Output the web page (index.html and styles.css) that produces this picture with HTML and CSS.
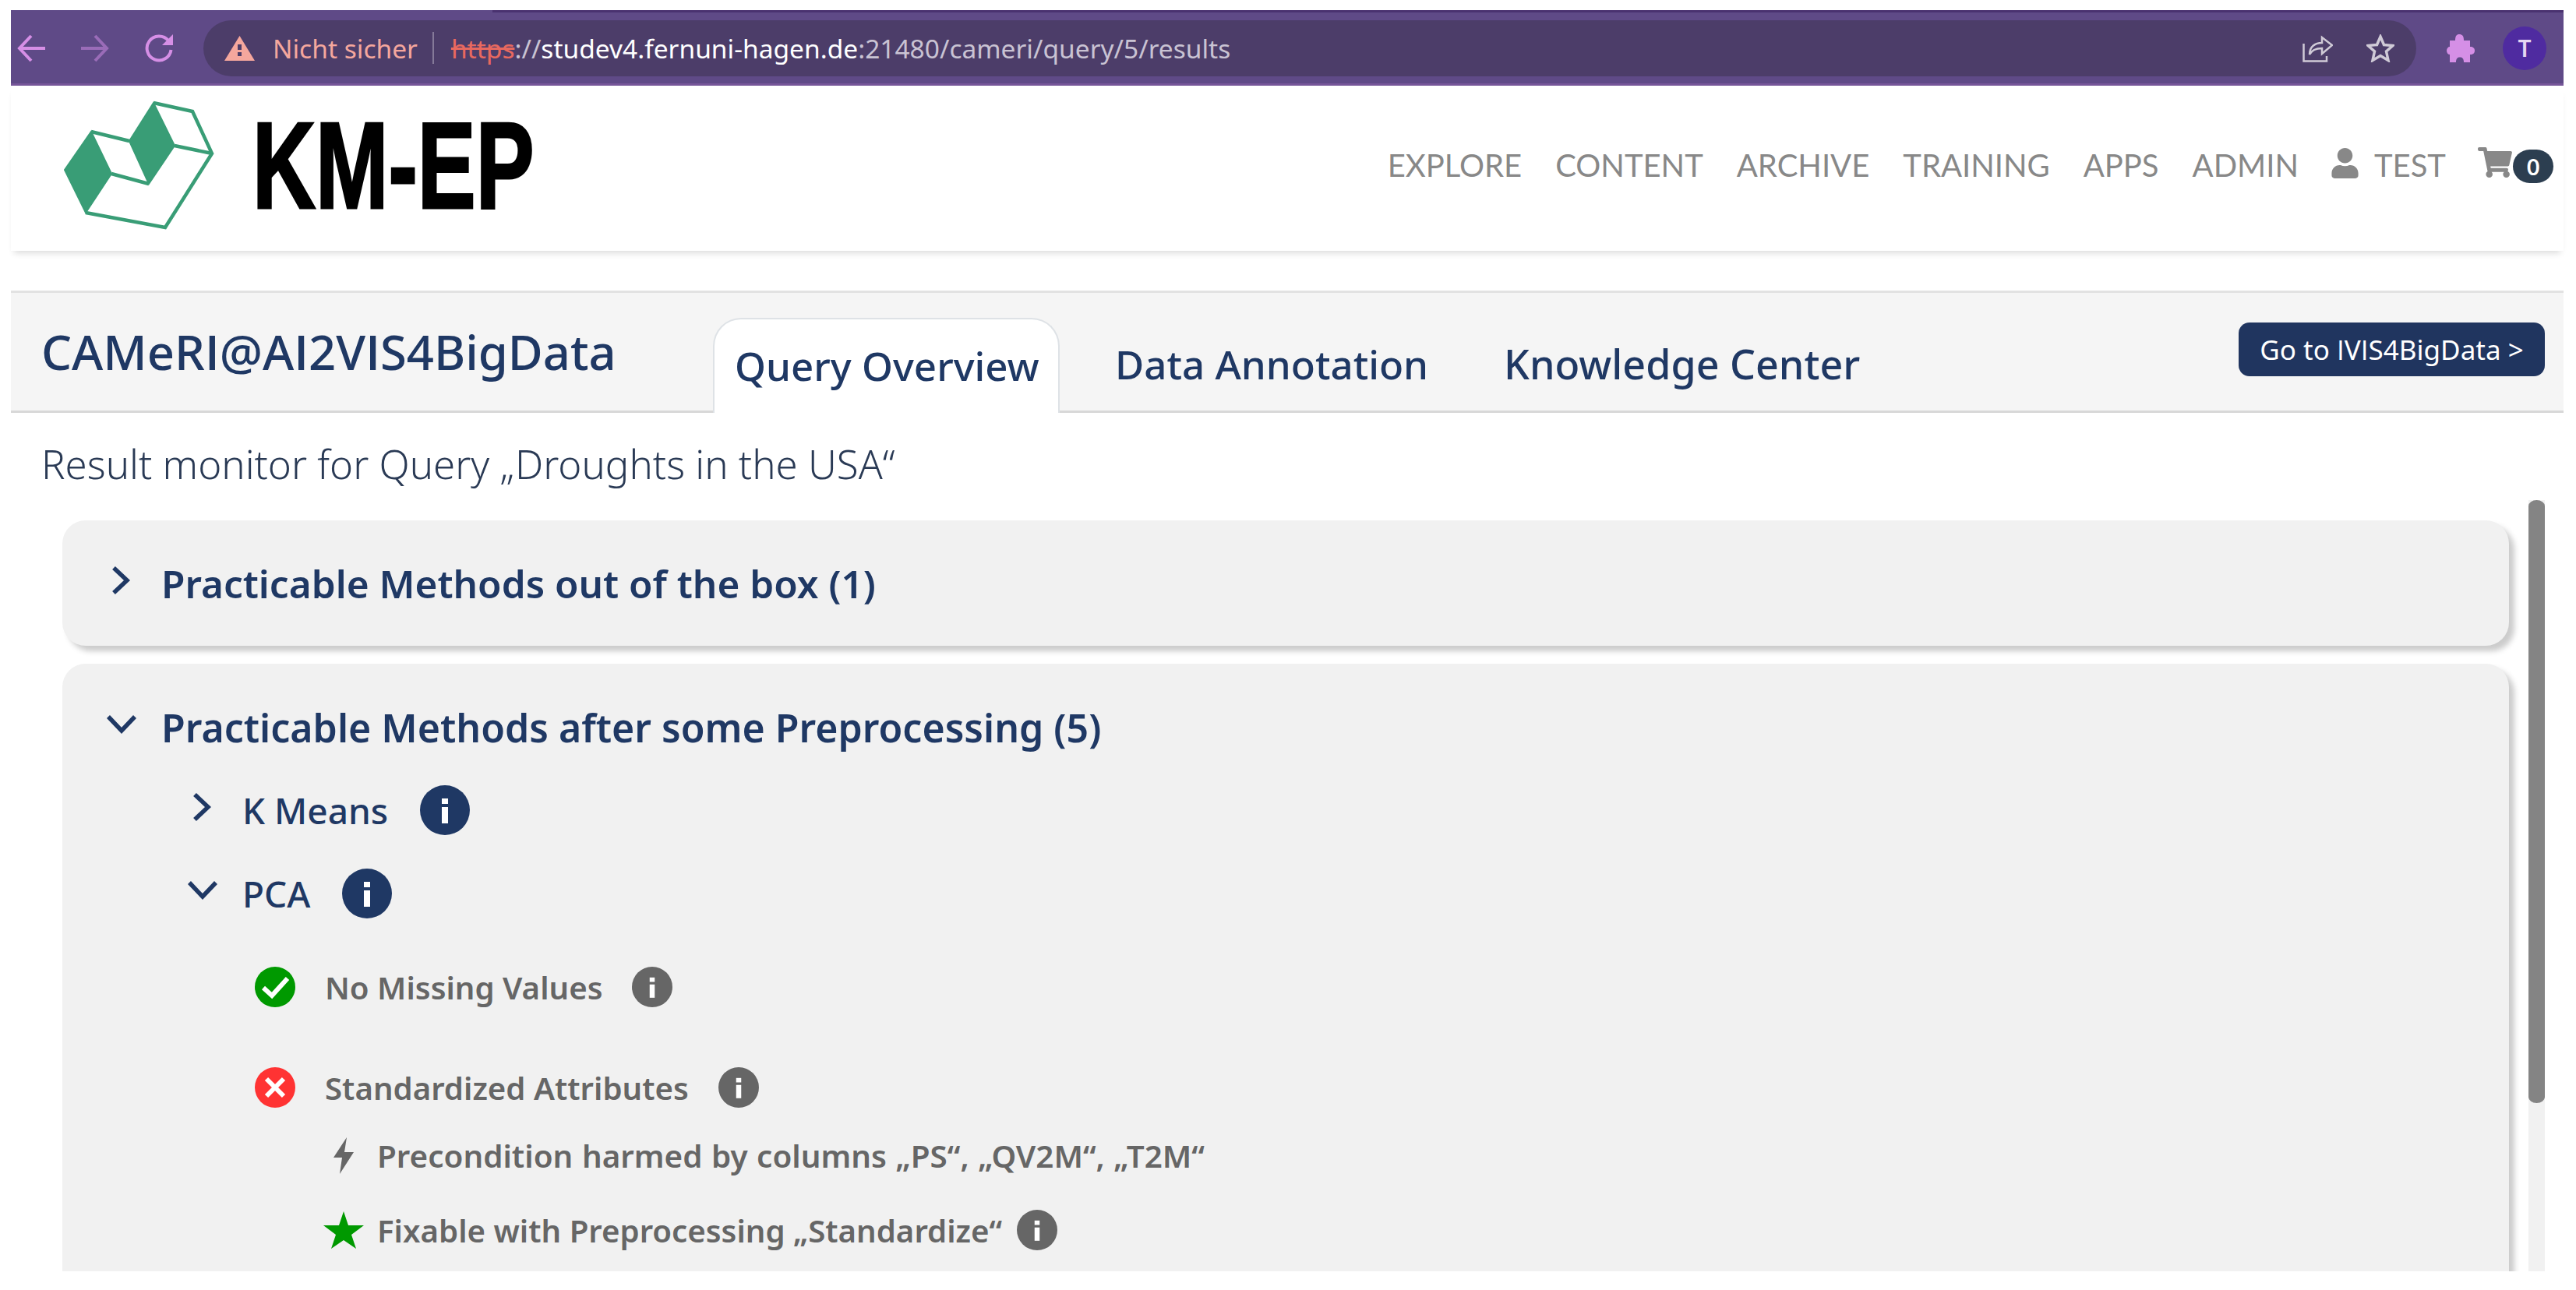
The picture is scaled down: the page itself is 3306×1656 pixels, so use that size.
FILE: index.html
```html
<!DOCTYPE html>
<html lang="de">
<head>
<meta charset="utf-8">
<title>CAMeRI@AI2VIS4BigData</title>
<link rel="stylesheet" href="styles.css">
</head>
<body>
<svg class="defs" width="0" height="0" aria-hidden="true">
  <symbol id="info" viewBox="0 0 64 64">
    <circle cx="32" cy="32" r="32" fill="currentColor"/>
    <rect x="28" y="17" width="8" height="7" fill="#fff"/>
    <rect x="28" y="28" width="8" height="21" fill="#fff"/>
  </symbol>
  <symbol id="chev-right" viewBox="0 0 38 38">
    <path d="M9 3 L26 19 L9 35" fill="none" stroke="#1f3864" stroke-width="5.5"/>
  </symbol>
  <symbol id="chev-down" viewBox="0 0 38 38">
    <path d="M2 9 L19 27 L36 9" fill="none" stroke="#1f3864" stroke-width="5.5"/>
  </symbol>
</svg>
<div class="page">
  <header class="chrome">
    <svg class="tb-icon" viewBox="0 0 36 36"><path d="M36 18 H4 M18 2 L3 18 L18 34" fill="none" stroke="#d68fe6" stroke-width="4"/></svg>
    <svg class="tb-icon" viewBox="0 0 36 36"><path d="M0 18 H32 M18 2 L33 18 L18 34" fill="none" stroke="#9a6cb8" stroke-width="4"/></svg>
    <svg class="tb-icon" viewBox="0 0 36 36"><path d="M30 8 A15.5 15.5 0 1 0 33.500 20" fill="none" stroke="#d68fe6" stroke-width="4"/><path d="M22 14 H36 V0 Z" fill="#d68fe6"/></svg>
    <div class="omni">
      <svg class="warn" viewBox="0 0 39 32"><path d="M19.500 0 L39 32 H0 Z" fill="#f5a79d"/><rect x="17" y="11" width="5" height="7" fill="#4c3d69"/><rect x="17" y="21" width="5" height="5" fill="#4c3d69"/></svg>
      <span class="unsafe">Nicht sicher</span>
      <span class="omni-sep"></span>
      <span class="url"><s class="scheme">https</s><span class="url-dim">://</span><span class="url-host">studev4.fernuni-hagen.de</span><span class="url-dim">:21480/cameri/query/5/results</span></span>
      <svg class="share" viewBox="0 0 39 36"><path d="M1.500 12 V34.500 H31 V28" fill="none" stroke="#cfcad6" stroke-width="2.500"/><path d="M9 26 C9 16 16 11 25 11 V4 L38 14 L25 25 V18 C18 18 12 20 9 26 Z" fill="none" stroke="#cfcad6" stroke-width="2.500"/></svg>
      <svg class="omni-star" viewBox="0 0 36 36"><path d="M18 3 L22.500 13.500 L34 14.500 L25.500 22 L28 33.500 L18 27.500 L8 33.500 L10.500 22 L2 14.500 L13.500 13.500 Z" fill="none" stroke="#cfcad6" stroke-width="3.500"/></svg>
    </div>
    <svg class="puzzle" viewBox="0 0 36 36"><path d="M4 8 H11 C11 2 13 0 16 0 C20 0 22 2 22 8 H30 V16 C34 16 36 18 36 21 C36 24 34 26 30 26 V36 H22 C22 31 20 29.500 17 29.500 C14 29.500 12 31 12 36 H4 V26 C2 26 0 24 0 21 C0 18 2 16 4 16 Z" fill="#d58fe6"/></svg>
    <div class="avatar">T</div>
  </header>

  <nav class="site-nav">
    <svg class="logo" viewBox="80 128 196 168">
      <path d="M83 218 L117 169 L143 223 L110 273 Z M166 181 L197 132 L224 187 L191 236 Z" fill="#399d76" stroke="#399d76" stroke-width="2"/>
      <path d="M117 169 L166 181 M143 223 L191 236 M197 132 L247 143 L272 197 L212 292 L110 273 M224 187 L272 197" fill="none" stroke="#399d76" stroke-width="4.500"/>
    </svg>
    <div class="wordmark"><span class="wordmark-text">KM-EP</span></div>
    <ul class="menu">
      <li>EXPLORE</li>
      <li>CONTENT</li>
      <li>ARCHIVE</li>
      <li>TRAINING</li>
      <li>APPS</li>
      <li>ADMIN</li>
      <li class="menu-user">
        <svg class="user-icon" viewBox="0 0 448 512"><path fill="#888" d="M224 256c70.700 0 128-57.300 128-128S294.700 0 224 0 96 57.300 96 128s57.300 128 128 128zm89.600 32h-16.700c-22.200 10.200-46.900 16-72.900 16s-50.600-5.800-72.900-16h-16.700C60.200 288 0 348.200 0 422.400V464c0 26.500 21.500 48 48 48h352c26.500 0 48-21.500 48-48v-41.600c0-74.200-60.200-134.400-134.400-134.400z"/></svg>
        TEST
      </li>
      <li class="menu-cart">
        <svg class="cart-icon" viewBox="0 0 576 512"><path fill="#888" d="M528.120 301.319l47.273-208C578.806 78.301 567.391 64 551.990 64H159.208l-9.166-44.810C147.758 8.021 137.930 0 126.529 0H24C10.745 0 0 10.745 0 24v16c0 13.255 10.745 24 24 24h69.883l70.248 343.435C147.325 417.100 136 435.222 136 456c0 30.928 25.072 56 56 56s56-25.072 56-56c0-15.674-6.447-29.835-16.824-40h209.647C430.447 426.165 424 440.326 424 456c0 30.928 25.072 56 56 56s56-25.072 56-56c0-22.172-12.888-41.332-31.579-50.405l5.517-24.276c3.413-15.018-8.002-29.319-23.403-29.319H218.117l-6.545-32h293.145c11.206 0 20.920-7.754 23.403-18.681z"/></svg>
        <span class="badge">0</span>
      </li>
    </ul>
  </nav>

  <section class="tabbar">
    <h1 class="app-title">CAMeR<span class="sans-i">I</span>@A<span class="sans-i">I</span>2V<span class="sans-i">I</span>S4BigData</h1>
    <div class="tabs">
      <div class="tab tab-active">Query Overview</div>
      <div class="tab tab-data">Data Annotation</div>
      <div class="tab tab-know">Knowledge Center</div>
    </div>
    <a class="go-btn"><span>Go to <span class="sans-i">I</span>V<span class="sans-i">I</span>S4BigData &gt;</span></a>
  </section>

  <p class="result-title">Result monitor for Query „Droughts in the USA“</p>

  <div class="results">
    <div class="acc-list">
      <div class="card card-closed">
        <div class="row row-h">
          <span class="chev-cell"><svg class="chev"><use href="#chev-right"/></svg></span>
          <span>Practicable Methods out of the box (1)</span>
        </div>
      </div>
      <div class="card card-open">
        <div class="row row-h">
          <span class="chev-cell"><svg class="chev"><use href="#chev-down"/></svg></span>
          <span>Practicable Methods after some Preprocessing (5)</span>
        </div>
        <div class="row row-m row-k">
          <span class="chev-cell"><svg class="chev"><use href="#chev-right"/></svg></span>
          <span>K Means</span>
          <svg class="info info-l"><use href="#info"/></svg>
        </div>
        <div class="row row-m row-p">
          <span class="chev-cell"><svg class="chev"><use href="#chev-down"/></svg></span>
          <span>PCA</span>
          <svg class="info info-l"><use href="#info"/></svg>
        </div>
        <div class="row row-c row-ok">
          <svg class="status" viewBox="0 0 52 52"><circle cx="26" cy="26" r="26" fill="#009900"/><path d="M11 27 L22 37 L42 15" fill="none" stroke="#fff" stroke-width="6"/></svg>
          <span>No Missing Values</span>
          <svg class="info info-s"><use href="#info"/></svg>
        </div>
        <div class="row row-c row-bad">
          <svg class="status" viewBox="0 0 52 52"><circle cx="26" cy="26" r="26" fill="#ff3333"/><path d="M15 15 L37 37 M37 15 L15 37" fill="none" stroke="#fff" stroke-width="6"/></svg>
          <span>Standardized Attributes</span>
          <svg class="info info-s"><use href="#info"/></svg>
        </div>
        <div class="row row-d row-bolt">
          <svg class="bolt" viewBox="0 0 26 47"><path d="M17 0 L0 26 H11 L8 47 L26 19 H14 Z" fill="#666"/></svg>
          <span>Precondition harmed by columns „PS“, „QV2M“, „T2M“</span>
        </div>
        <div class="row row-d row-fix">
          <svg class="star" viewBox="0 0 52 48"><path d="M26 0 L32 18 L52 18 L36 30 L42 48 L26 37 L10 48 L16 30 L0 18 L20 18 Z" fill="#009900"/></svg>
          <span>Fixable with Preprocessing „Standardize“</span>
          <svg class="info info-s"><use href="#info"/></svg>
        </div>
      </div>
    </div>
    <div class="scroll-track"><div class="scroll-thumb"></div></div>
  </div>
</div>
</body>
</html>
```

FILE: styles.css
```css
* { box-sizing: border-box; }
html, body { margin: 0; padding: 0; background: #fff; }
body { font-family: "Noto Sans", sans-serif; overflow: hidden; height: 1656px; }
.defs { display: block; height: 0; }
.page { width: 3276px; margin: 13px 0 0 14px; }
.sans-i { font-family: "Open Sans", sans-serif; }
.app-title .sans-i { font-weight: 600; }

/* browser toolbar */
.chrome {
  position: relative;
  height: 97px;
  background: #5f4a87;
  border-bottom: 3px solid #765699;
  display: flex;
  align-items: center;
  padding-left: 8px;
  gap: 46px;
  padding-top: 3px;
}
.chrome::before {
  content: "";
  position: absolute;
  left: 618px; right: 0; top: 0;
  height: 3px;
  background: #4a3270;
}
.tb-icon { width: 36px; height: 36px; flex: none; }
.omni {
  flex: none;
  width: 2840px;
  height: 72px;
  margin-left: -7px;
  border-radius: 36px;
  background: #4c3d69;
  display: flex;
  align-items: center;
  padding: 0 28px 0 27px;
  font-size: 33.500px;
  font-family: "Noto Sans", sans-serif;
}
.warn { width: 39px; height: 32px; margin-right: 23px; flex: none; }
.unsafe { color: #f5a79d; }
.omni-sep { width: 2px; height: 41px; background: #857a99; margin: 0 22px 0 19px; flex: none; }
.url { white-space: nowrap; }
.scheme { color: #e8695f; }
.url-dim { color: #c9c3d3; }
.url-host { color: #fff; }
.share { width: 39px; height: 36px; margin-left: auto; flex: none; }
.omni-star { width: 36px; height: 36px; margin-left: 43px; flex: none; }
.puzzle { width: 36px; height: 36px; flex: none; margin-left: -7px; }
.avatar {
  width: 56px; height: 56px;
  border-radius: 50%;
  background: #4f2ba0;
  color: #e6d6f2;
  display: flex; align-items: center; justify-content: center;
  font-size: 30px; font-weight: 600;
  flex: none;
  margin-left: -10px;
}

/* site navbar */
.site-nav {
  height: 212px;
  display: flex;
  align-items: center;
  box-shadow: 0 7px 8px -4px rgba(0,0,0,.14);
  padding-right: 13px;
}
.logo { width: 196px; height: 168px; margin-left: 66px; margin-bottom: 8px; flex: none; }
.wordmark { width: 358px; margin-left: 48px; height: 115px; margin-bottom: 8px; flex: none; }
.wordmark-text {
  display: block;
  font-family: "Liberation Sans", sans-serif;
  font-weight: 700;
  font-size: 158px;
  line-height: 115px;
  color: #000;
  white-space: nowrap;
  transform: scaleX(.71);
  transform-origin: left center;
  -webkit-text-stroke: 3px #000;
}
.menu {
  list-style: none;
  margin: 0 0 8px auto;
  padding: 0;
  display: flex;
  align-items: center;
  gap: 43px;
  font-family: Lato, sans-serif;
  font-size: 40px;
  color: #888;
}
.menu-user { display: flex; align-items: center; gap: 20px; margin-left: -1px; }
.user-icon { width: 35px; height: 39px; margin-bottom: 6px; }
.menu-cart { display: flex; align-items: flex-start; margin-left: -2px; }
.cart-icon { width: 44px; height: 39px; }
.badge {
  width: 52px; height: 43px;
  margin-left: 1px; margin-top: 3px;
  border-radius: 22px;
  background: #2c3e50;
  color: #fff;
  font-size: 28px; font-weight: 700;
  display: flex; align-items: center; justify-content: center;
}

/* tab bar */
.tabbar {
  margin-top: 51px;
  height: 157px;
  background: #f5f5f5;
  border-top: 3px solid #e2e2e2;
  border-bottom: 3px solid #d8d8d8;
  display: flex;
  align-items: flex-end;
  padding-left: 39px;
  position: relative;
}
.app-title {
  margin: 0;
  align-self: flex-start;
  margin-top: 35px;
  width: 862px;
  flex: none;
  font-size: 61.500px;
  font-weight: 500;
  line-height: 80px;
  color: #1f3864;
  white-space: nowrap;
}
.tabs { display: flex; align-items: flex-end; margin-bottom: -3px; }
.tab {
  height: 122px;
  font-size: 51px;
  font-weight: 500;
  color: #1f3864;
  white-space: nowrap;
  padding-top: 24px;
  line-height: 70px;
}
.tab-active {
  width: 445px;
  padding-left: 26px;
  background: #fff;
  border: 2px solid #dee2e6;
  border-bottom: 0;
  border-radius: 36px 36px 0 0;
}
.tab-data { margin-left: 71px; }
.tab-know { margin-left: 97px; font-size: 52px; }
.go-btn {
  margin-left: auto;
  margin-right: 24px;
  align-self: flex-start;
  margin-top: 38px;
  width: 393px; height: 69px;
  border-radius: 14px;
  background: #20355f;
  color: #fff;
  font-size: 35px;
  display: flex; align-items: center; justify-content: center;
}

.result-title {
  margin: 32px 0 0 39px;
  height: 74px;
  font-size: 51px;
  font-weight: 300;
  line-height: 66px;
  color: #2a3a55;
}

/* results */
.results {
  height: 990px;
  margin-top: 6px;
  display: flex;
  overflow: hidden;
}
.acc-list { width: 3231px; flex: none; padding: 26px 0 0 66px; overflow: hidden; }
.scroll-track { width: 21px; height: 990px; background: #f1f1f1; flex: none; }
.scroll-thumb { height: 774px; background: #848484; border-radius: 11px / 8px; }
.card {
  width: 3140px;
  background: #f1f1f1;
  border-radius: 30px;
  box-shadow: 7px 7px 7px #ccc;
}
.card-closed { height: 161px; padding-top: 51px; }
.card-open { height: 830px; margin-top: 23px; padding-top: 52px; }

.row { display: flex; align-items: center; height: 60px; white-space: nowrap; }
.row-h, .row-m { color: #1f3864; font-size: 50px; font-weight: 560; }
.card-closed .row-h { font-size: 49.500px; }
.row-m { font-size: 46px; font-weight: 500; }
.row-c, .row-d { color: #666; font-size: 40.200px; font-weight: 600; }
.row-h { padding-left: 57px; }
.row-m { padding-left: 161px; }
.chev-cell { width: 70px; flex: none; display: flex; padding-bottom: 8px; }
.chev { width: 38px; height: 38px; }
.row-k { margin-top: 46px; }
.row-p { margin-top: 47px; }
.row-ok { margin-top: 60px; padding-left: 247px; }
.row-bad { margin-top: 69px; padding-left: 247px; }
.row-bolt { margin-top: 27px; padding-left: 348px; font-size: 40.400px; word-spacing: 1px; }
.row-fix { margin-top: 36px; padding-left: 335px; }
.status { width: 52px; height: 52px; margin-right: 38px; flex: none; }
.bolt { width: 26px; height: 47px; margin-right: 30px; flex: none; }
.star { width: 52px; height: 48px; margin-right: 17px; flex: none; }
.info { flex: none; }
.info-l { width: 64px; height: 64px; margin-left: 41px; color: #1f3864; }
.info-s { width: 52px; height: 52px; margin-left: 38px; color: #666; }
.row-fix .info-s { margin-left: 19px; }
```
